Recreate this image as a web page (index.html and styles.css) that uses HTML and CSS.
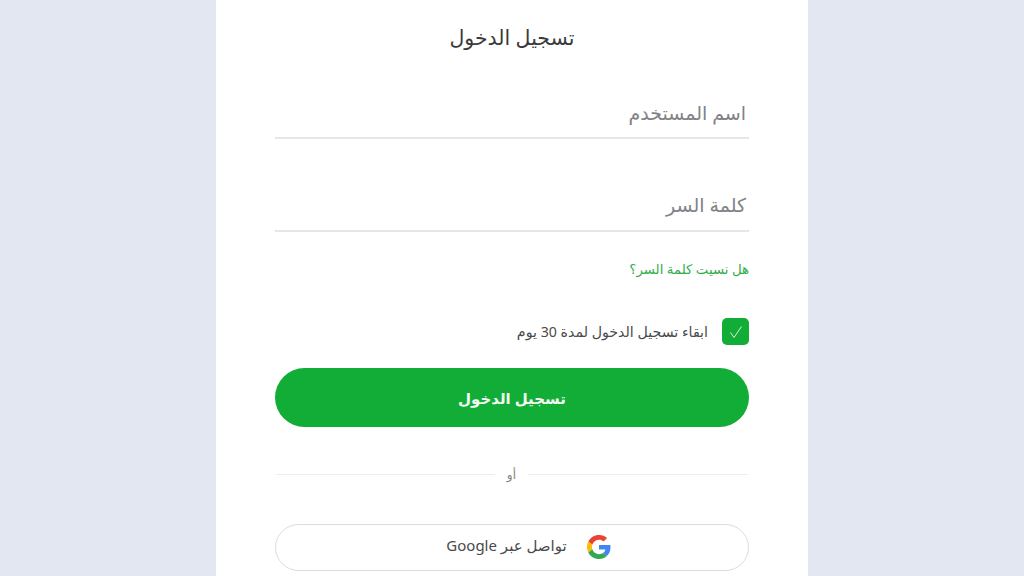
FILE: index.html
```html
<!DOCTYPE html>
<html lang="ar" dir="rtl">

<head>
    <meta charset="UTF-8">
    <meta name="viewport" content="width=device-width, initial-scale=1.0">
    <title>تسجيل الدخول</title>
    <link rel="stylesheet" href="styles.css">
</head>

<body>
    <div class="card">
        <h1 class="title">تسجيل الدخول</h1>
        <div class="field field-user">اسم المستخدم</div>
        <div class="field field-pass">كلمة السر</div>
        <a class="forgot" href="#">هل نسيت كلمة السر؟</a>
        <label class="remember">
            <span class="check">
                <svg width="14" height="14" viewBox="0 0 14 14">
                    <path d="M1.5 7.5 L5 12.5 L12.5 1.5" fill="none" stroke="#d8f2dc" stroke-width="1" />
                </svg>
            </span>
            <span>ابقاء تسجيل الدخول لمدة 30 يوم</span>
        </label>
        <button class="btn-login">تسجيل الدخول</button>
        <div class="divider"><span>أو</span></div>
        <button class="btn-google">
            <svg width="24" height="24" viewBox="0 0 48 48">
                <path fill="#EA4335" d="M24 9.5c3.5 0 6.7 1.2 9.2 3.6l6.9-6.9C35.9 2.4 30.5 0 24 0 14.6 0 6.5 5.4 2.6 13.2l8 6.2C12.5 13.6 17.800 9.500 24 9.500z" />
                <path fill="#4285F4" d="M47 24.500c0-1.600-.1-3.100-.4-4.500H24v9h12.900c-.6 3-2.200 5.400-4.700 7.100l7.700 6C44.400 37.900 47 31.800 47 24.500z" />
                <path fill="#FBBC05" d="M10.600 28.600C10.100 27.200 9.800 25.600 9.800 24s.3-3.200.8-4.600l-8-6.200C.9 16.500 0 20.100 0 24s.9 7.500 2.600 10.800l8-6.200z" />
                <path fill="#34A853" d="M24 48c6.500 0 11.900-2.100 15.900-5.900l-7.700-6c-2.200 1.400-4.900 2.300-8.200 2.300-6.200 0-11.500-4.100-13.400-9.800l-8 6.200C6.500 42.600 14.600 48 24 48z" />
            </svg>
            <span class="google-label">تواصل عبر Google</span>
        </button>
    </div>
</body>

</html>
```

FILE: styles.css
```css
* {
    padding: 0;
    margin: 0;
    box-sizing: border-box;
}

body {
    font-family: "Noto Sans", "DejaVu Sans", sans-serif;
    background-color: #e3e7f1;
    height: 576px;
    overflow: hidden;
    display: flex;
    justify-content: center;
}

.card {
    width: 592px;
    height: 576px;
    background-color: #fff;
    padding: 0 59px;
    display: flex;
    flex-direction: column;
}

.title {
    margin-top: 21px;
    height: 32px;
    line-height: 32px;
    font-size: 20.5px;
    font-weight: 400;
    color: #3a3a3a;
    text-align: center;
}

.field {
    border-bottom: 2px solid #e6e6e6;
    padding-right: 3px;
    font-size: 19px;
    color: #808386;
}

.field-user {
    margin-top: 45px;
    height: 41px;
    line-height: 30px;
}

.field-pass {
    margin-top: 52px;
    height: 41px;
    line-height: 28px;
}

.forgot {
    margin-top: 26px;
    height: 22px;
    line-height: 22px;
    font-size: 13.3px;
    color: #2fae4a;
    text-decoration: none;
}

.remember {
    margin-top: 38px;
    height: 27px;
    display: flex;
    align-items: center;
    gap: 14px;
    font-size: 14.2px;
    color: #4a4a4a;
}

.check {
    width: 27px;
    height: 27px;
    border-radius: 5px;
    background-color: #12ad37;
    display: flex;
    align-items: center;
    justify-content: center;
}

.btn-login {
    margin-top: 23px;
    height: 59px;
    border: 0;
    border-radius: 30px;
    background-color: #12ad37;
    color: #f4fbf5;
    font-family: inherit;
    font-size: 15px;
    font-weight: 600;
}

.divider {
    margin-top: 36px;
    height: 22px;
    padding: 0 1px;
    display: flex;
    align-items: center;
    gap: 12px;
    font-size: 12px;
    color: #808080;
}

.divider::before,
.divider::after {
    content: '';
    height: 1px;
    background-color: #ececec;
}

.divider::before {
    width: 220px;
}

.divider::after {
    flex: 1;
}

.btn-google {
    margin-top: 39px;
    height: 47px;
    padding-left: 33px;
    padding-bottom: 2px;
    border: 1px solid #dcdcdc;
    border-radius: 24px;
    background-color: #fff;
    color: #4a4a4a;
    font-family: inherit;
    font-size: 15px;
    display: flex;
    align-items: center;
    justify-content: center;
    gap: 20px;
}

.google-label {
    padding-bottom: 4px;
}
```
